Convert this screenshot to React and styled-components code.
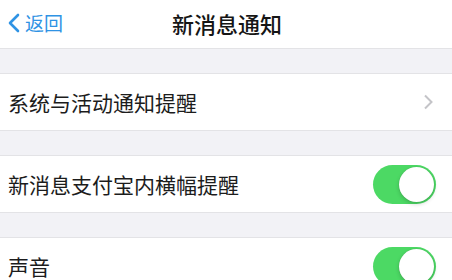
import React from "react";
import styled, { createGlobalStyle } from "styled-components";

const GlobalStyle = createGlobalStyle`
  html, body {
    margin: 0;
    padding: 0;
    background: #f2f2f6;
    font-family: "Noto Sans CJK SC", "Noto Sans", sans-serif;
    overflow: hidden;
  }
`;

const Page = styled.div`
  width: 452px;
  height: 280px;
  background: #f2f2f6;
  overflow: hidden;
`;

const NavBar = styled.div`
  height: 45px;
  padding-bottom: 3px;
  background: #fff;
  border-bottom: 1px solid #e3e3e6;
  display: grid;
  grid-template-columns: 1fr auto 1fr;
  align-items: center;
`;

const Back = styled.div`
  display: flex;
  align-items: center;
  gap: 5px;
  padding-left: 7px;
  color: #2f93e4;
  font-size: 19px;
  line-height: 1;
`;

const Title = styled.div`
  font-size: 22px;
  font-weight: 500;
  color: #151515;
  line-height: 1;
  transform: translateX(1px);
`;

const Gap = styled.div`
  height: 24px;
`;

const Row = styled.div`
  height: 56px;
  background: #fff;
  border-top: 1px solid #e3e3e6;
  border-bottom: 1px solid #e3e3e6;
  display: flex;
  align-items: center;
  justify-content: space-between;
  padding: 0 16px 0 8px;
`;

const Label = styled.span`
  font-size: 21px;
  color: #1c1c1c;
  line-height: 1;
`;

const Switch = styled.div`
  width: 63px;
  height: 39px;
  border-radius: 20px;
  background: ${(p) => (p.$on ? "#4cd964" : "#e5e5ea")};
  position: relative;
`;

const Knob = styled.div`
  position: absolute;
  top: 2px;
  left: ${(p) => (p.$on ? "26px" : "2px")};
  width: 35px;
  height: 35px;
  border-radius: 50%;
  background: #fff;
  box-shadow: 0 2px 4px rgba(0, 0, 0, 0.18), 0 0 1px rgba(0, 0, 0, 0.2);
`;

const Toggle = ({ on }) => (
  <Switch $on={on}>
    <Knob $on={on} />
  </Switch>
);

const Chevron = () => (
  <svg width="12" height="16" viewBox="0 0 12 16" style={{ marginRight: 2 }}>
    <path d="M3 1.5 L9.5 8 L3 14.5" fill="none" stroke="#c4c4c8" strokeWidth="2" />
  </svg>
);

const BackIcon = () => (
  <svg width="13" height="20" viewBox="0 0 13 20">
    <path d="M11 2 L3 10 L11 18" fill="none" stroke="#2f93e4" strokeWidth="2.6" strokeLinecap="round" strokeLinejoin="round" />
  </svg>
);

export default function App() {
  return (
    <Page>
      <GlobalStyle />
      <NavBar>
        <Back>
          <BackIcon />
          <span>返回</span>
        </Back>
        <Title>新消息通知</Title>
        <div />
      </NavBar>
      <Gap />
      <Row>
        <Label>系统与活动通知提醒</Label>
        <Chevron />
      </Row>
      <Gap />
      <Row>
        <Label>新消息支付宝内横幅提醒</Label>
        <Toggle on />
      </Row>
      <Gap />
      <Row>
        <Label>声音</Label>
        <Toggle on />
      </Row>
    </Page>
  );
}
